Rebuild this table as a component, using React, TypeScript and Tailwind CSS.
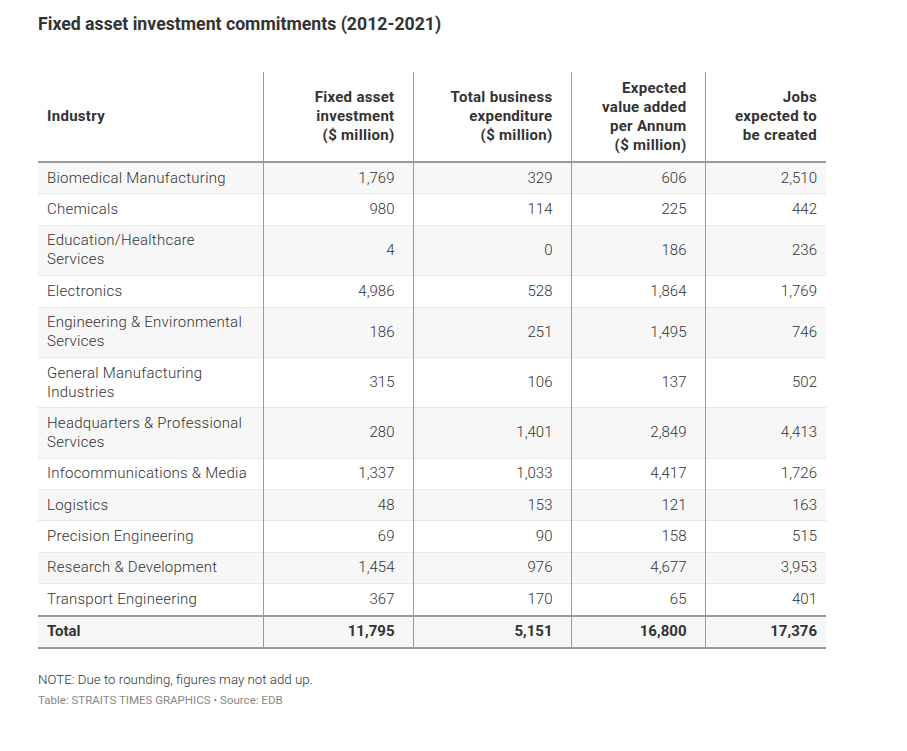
import React from "react";

type Row = { name: React.ReactNode; v: string[]; two?: boolean };

const rows: Row[] = [
  { name: "Biomedical Manufacturing", v: ["1,769", "329", "606", "2,510"] },
  { name: "Chemicals", v: ["980", "114", "225", "442"] },
  { name: <>Education/Healthcare<br />Services</>, v: ["4", "0", "186", "236"], two: true },
  { name: "Electronics", v: ["4,986", "528", "1,864", "1,769"] },
  { name: <>Engineering &amp; Environmental<br />Services</>, v: ["186", "251", "1,495", "746"], two: true },
  { name: <>General Manufacturing<br />Industries</>, v: ["315", "106", "137", "502"], two: true },
  { name: <>Headquarters &amp; Professional<br />Services</>, v: ["280", "1,401", "2,849", "4,413"], two: true },
  { name: "Infocommunications & Media", v: ["1,337", "1,033", "4,417", "1,726"] },
  { name: "Logistics", v: ["48", "153", "121", "163"] },
  { name: "Precision Engineering", v: ["69", "90", "158", "515"] },
  { name: "Research & Development", v: ["1,454", "976", "4,677", "3,953"] },
  { name: "Transport Engineering", v: ["367", "170", "65", "401"] },
];

export default function App() {
  return (
    <div
      className="bg-white w-[907px] h-[751px] px-[38px] pt-[14px] text-[#333]"
      style={{ fontFamily: "Roboto, 'Liberation Sans', sans-serif" }}
    >
      <h1 className="text-[17.7px] leading-[21px] font-bold text-[#333]">
        Fixed asset investment commitments (2012-2021)
      </h1>
      <table className="mt-[37px] w-[788px] border-collapse table-fixed">
        <colgroup>
          <col className="w-[225px]" />
          <col className="w-[150px]" />
          <col className="w-[158px]" />
          <col className="w-[134px]" />
          <col className="w-[121px]" />
        </colgroup>
        <thead>
          <tr className="border-b-2 border-[#9a9a9a] text-[15px] leading-[19px] font-bold tracking-[0.3px] text-[#333]">
            <th className="text-left align-middle pl-[9px] py-[6.5px] border-r border-[#9a9a9a]">Industry</th>
            <th className="text-right align-middle pr-[18px] py-[6.5px] border-r border-[#9a9a9a]">
              Fixed asset<br />investment<br />($ million)
            </th>
            <th className="text-right align-middle pr-[18px] py-[6.5px] border-r border-[#9a9a9a]">
              Total business<br />expenditure<br />($ million)
            </th>
            <th className="text-right align-middle pr-[18px] py-[6.5px] border-r border-[#9a9a9a]">
              Expected<br />value added<br />per Annum<br />($ million)
            </th>
            <th className="text-right align-middle pr-[9px] py-[6.5px]">
              Jobs<br />expected to<br />be created
            </th>
          </tr>
        </thead>
        <tbody className="text-[15px] leading-[19px] font-light text-[#333]">
          {rows.map((r, i) => (
            <tr
              key={i}
              className={`${i % 2 === 0 ? "bg-[#f7f7f7]" : "bg-white"} ${
                i === rows.length - 1 ? "border-b-2 border-[#9a9a9a]" : "border-b border-[#e8e8e8]"
              }`}
            >
              <td className="text-left pl-[9px] py-[5.7px] whitespace-nowrap tracking-[0.25px] border-r border-[#9a9a9a]">{r.name}</td>
              <td className="text-right pr-[18px] py-[5.7px] align-middle border-r border-[#9a9a9a]">{r.v[0]}</td>
              <td className="text-right pr-[18px] py-[5.7px] align-middle border-r border-[#9a9a9a]">{r.v[1]}</td>
              <td className="text-right pr-[18px] py-[5.7px] align-middle border-r border-[#9a9a9a]">{r.v[2]}</td>
              <td className="text-right pr-[9px] py-[5.7px] align-middle">{r.v[3]}</td>
            </tr>
          ))}
          <tr className="bg-[#f7f7f7] border-b-2 border-[#9a9a9a] font-bold text-[15px]">
            <td className="text-left pl-[9px] py-[5.5px] border-r border-[#9a9a9a]">Total</td>
            <td className="text-right pr-[18px] py-[5.5px] border-r border-[#9a9a9a]">11,795</td>
            <td className="text-right pr-[18px] py-[5.5px] border-r border-[#9a9a9a]">5,151</td>
            <td className="text-right pr-[18px] py-[5.5px] border-r border-[#9a9a9a]">16,800</td>
            <td className="text-right pr-[9px] py-[5.5px]">17,376</td>
          </tr>
        </tbody>
      </table>
      <p className="mt-[23px] text-[13.3px] leading-[16px] font-light text-[#333]">
        NOTE: Due to rounding, figures may not add up.
      </p>
      <p className="mt-[5px] text-[11.5px] leading-[14px] text-[#888]">
        Table: STRAITS TIMES GRAPHICS • Source: EDB
      </p>
    </div>
  );
}
